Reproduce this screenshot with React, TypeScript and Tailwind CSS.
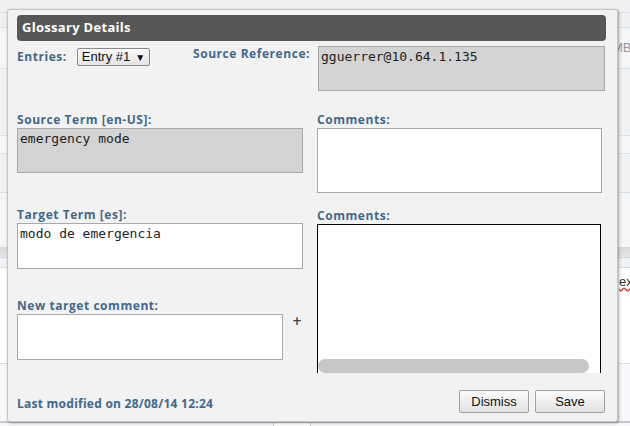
import React from 'react';

const labelBase =
  "font-['Open_Sans','Noto_Sans',sans-serif] font-bold text-[12px] leading-[16px] text-[#42698b]";
const labelCls = `${labelBase} tracking-[0.55px]`;
const monoCls = "font-['DejaVu_Sans_Mono',monospace] text-[13px] leading-[16px] text-[#222]";

const Background: React.FC = () => (
  <div className="flex flex-col h-full font-['Liberation_Sans',sans-serif] text-[13px] text-[#666]">
    <div className="h-[12px] bg-[#eef0f2]" />
    <div className="h-[15px] bg-[#eef0f2] border-t border-[#e1e3e6]" />
    <div className="h-[41px] bg-[#f4f5f6] border-t border-[#dcdfe3] flex items-center">
      <span className="ml-[612px] text-[#999]">MB</span>
    </div>
    <div className="h-[67px] bg-[#f0f1f3] border-t border-[#dcdfe3]" />
    <div className="h-[18px] bg-[#f4f5f6] border-t border-[#dcdfe3]" />
    <div className="h-[39px] bg-[#f0f1f3] border-t border-[#dcdfe3]" />
    <div className="h-[55px] bg-[#f4f5f6] border-t border-[#dcdfe3]" />
    <div className="h-[10px] bg-gradient-to-b from-[#d9d9d9] to-[#e6e6e6]" />
    <div className="h-[10px] bg-[#eef1f6] border-t border-[#d4d8de]" />
    <div className="h-[96px] bg-white border-t border-[#d6dce6] flex items-start">
      <span className="ml-[619px] mt-[4px] text-[#333] underline decoration-wavy decoration-[#e03030]">ex</span>
    </div>
    <div className="flex-1 bg-[#f6f8fb] border-t border-[#d6dce6] flex flex-col">
      <div className="flex-1" />
      <div className="h-[5px] border-t-2 border-[#c9c9c9] flex">
        <div className="ml-[273px] w-[38px] bg-white border-x border-[#d0d0d0]" />
      </div>
    </div>
  </div>
);

const App: React.FC = () => {
  return (
    <div className="relative w-[630px] h-[426px] overflow-hidden bg-[#eef0f2]">
      <Background />

      <div className="absolute left-[7px] top-[9px] w-[611px] h-[413px] bg-[#f2f2f2] border border-[#c4c4c4] rounded-[3px] shadow-[1px_1px_3px_rgba(0,0,0,0.35)] flex flex-col pl-[9px] pr-[11px] pt-[5px] pb-[8px]">
        <div className="h-[26px] bg-[#575757] rounded-[4px] flex items-center px-[5px]">
          <span className="font-['Open_Sans','Noto_Sans',sans-serif] font-bold text-[13px] tracking-[0.3px] text-white">
            Glossary Details
          </span>
        </div>

        {/* source reference row */}
        <div className="flex mt-[5px]">
          <div className="w-[301px] flex items-start">
            <span className={`${labelCls} mt-[3px]`}>Entries:</span>
            <div className="ml-[10px] mt-[2px] h-[18px] w-[73px] border border-[#8a8a8a] rounded-[2px] bg-gradient-to-b from-[#fafafa] to-[#e4e4e4] flex items-center pl-[4px] font-['Liberation_Sans',sans-serif] text-[13px] text-[#111]">
              Entry #1
              <span className="ml-[5px] text-[10px]">▼</span>
            </div>
            <span className={`${labelCls} ml-auto mr-[8px] mt-[0px]`}>Source Reference:</span>
          </div>
          <div className={`w-[287px] h-[45px] bg-[#d3d3d3] border border-[#a9a9a9] px-[2px] pt-[2px] ${monoCls}`}>
            gguerrer@10.64.1.135
          </div>
        </div>

        {/* term columns */}
        <div className="flex mt-[21px]">
          <div className="w-[300px] flex flex-col">
            <span className={labelCls}>Source Term [en-US]:</span>
            <div className={`w-[286px] h-[45px] bg-[#d3d3d3] border border-[#a9a9a9] px-[2px] pt-[2px] ${monoCls}`}>
              emergency mode
            </div>

            <span className={`${labelCls} mt-[34px]`}>Target Term [es]:</span>
            <div className={`w-[286px] h-[46px] bg-white border border-[#a9a9a9] px-[2px] pt-[2px] ${monoCls}`}>
              modo de emergencia
            </div>

            <span className={`${labelCls} mt-[29px]`}>New target comment:</span>
            <div className="flex items-start">
              <div className="w-[266px] h-[46px] bg-white border border-[#a9a9a9]" />
              <span className="ml-[9px] mt-[-1px] font-['DejaVu_Sans',sans-serif] font-bold text-[12px] leading-[16px] text-[#444]">
                +
              </span>
            </div>
          </div>

          <div className="w-[287px] flex flex-col">
            <span className={labelCls}>Comments:</span>
            <div className="w-[285px] h-[65px] bg-white border border-[#a9a9a9]" />

            <span className={`${labelCls} mt-[15px]`}>Comments:</span>
            <div className="w-[284px] h-[149px] bg-white border-x border-t border-black flex flex-col justify-end">
              <div className="h-[14px] w-[271px] rounded-full bg-[#c8c8c8]" />
            </div>
          </div>
        </div>

        {/* footer */}
        <div className="mt-auto flex items-end">
          <span className={`${labelBase} tracking-[0.25px] mb-[1px]`}>Last modified on 28/08/14 12:24</span>
          <div className="ml-auto mr-[1px] flex gap-[6px]">
            <button className="w-[70px] h-[23px] border border-[#a0a0a0] rounded-[2px] bg-gradient-to-b from-[#fbfbfb] to-[#e2e2e2] font-['Liberation_Sans',sans-serif] text-[13px] text-[#111]">
              Dismiss
            </button>
            <button className="w-[70px] h-[23px] border border-[#a0a0a0] rounded-[2px] bg-gradient-to-b from-[#fbfbfb] to-[#e2e2e2] font-['Liberation_Sans',sans-serif] text-[13px] text-[#111]">
              Save
            </button>
          </div>
        </div>
      </div>
    </div>
  );
};

export default App;
